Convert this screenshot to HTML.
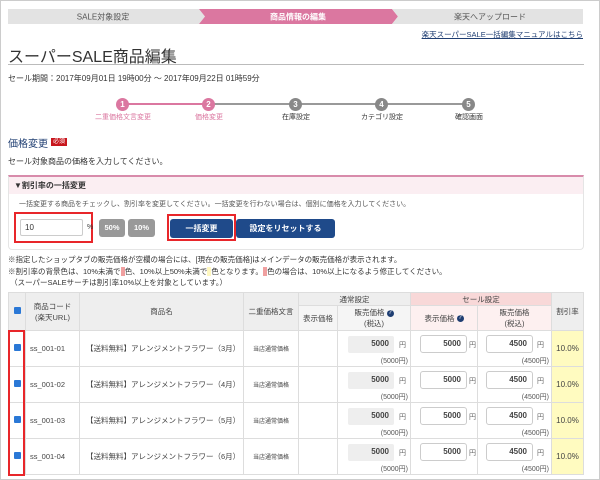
<!DOCTYPE html>
<html><head><meta charset="utf-8"><style>
*{margin:0;padding:0;box-sizing:border-box}
body{width:600px;height:480px;overflow:hidden;background:#fff;font-family:"Liberation Sans","Noto Sans CJK JP",sans-serif;color:#333;position:relative;border:1px solid #ccc}
.a{position:absolute;white-space:nowrap}
.tabs{position:absolute;left:7px;top:8px;width:575px;height:15px}
.circ{position:absolute;width:13px;height:13px;border-radius:50%;color:#fff;font-size:8px;text-align:center;line-height:13px;font-weight:bold}
.lbl{position:absolute;font-size:7px;width:80px;text-align:center}
table{position:absolute;left:7px;top:291px;border-collapse:collapse;table-layout:fixed;width:575px;font-size:7.5px}
td,th{border:1px solid #ddd;text-align:center;font-weight:normal;color:#444}
th{background:#eee}
.q{display:inline-block;width:7px;height:7px;border-radius:50%;background:#1f3e72;color:#fff;font-size:6px;line-height:7px;vertical-align:middle}
.cb{display:inline-block;width:7px;height:7px;background:#2a78d6;border-radius:1px}
.inp{position:absolute;border:1px solid #ccc;border-radius:3px;background:#fff;font-size:8px;font-weight:bold;text-align:right;padding-right:5px;line-height:16px;height:18px}
.gr{position:absolute;background:#eee;border-radius:2px;font-size:8px;font-weight:bold;text-align:right;padding-right:5px;line-height:16px;height:17px}
td{position:relative}
.yen{position:absolute;font-size:7px;color:#666}
.sub{position:absolute;font-size:7px;color:#555}
</style></head><body>
<svg class="tabs" width="575" height="15" viewBox="0 0 575 15">
<polygon points="0,0 191,0 197,7.5 191,15 0,15" fill="#e3e3e3"/>
<polygon points="191,0 384,0 390,7.5 384,15 191,15 197,7.5" fill="#db77a0"/>
<polygon points="384,0 575,0 575,15 384,15 390,7.5" fill="#e3e3e3"/>
<text x="95" y="10.5" font-size="8" fill="#555" text-anchor="middle" font-family="Liberation Sans,Noto Sans CJK JP,sans-serif">SALE対象設定</text>
<text x="290" y="10.5" font-size="8" fill="#fff" font-weight="bold" text-anchor="middle" font-family="Liberation Sans,Noto Sans CJK JP,sans-serif">商品情報の編集</text>
<text x="482" y="10.5" font-size="8" fill="#555" text-anchor="middle" font-family="Liberation Sans,Noto Sans CJK JP,sans-serif">楽天へアップロード</text>
</svg>
<div class="a" style="right:16px;top:28px;font-size:7.5px;color:#1f3e72;text-decoration:underline">楽天スーパーSALE一括編集マニュアルはこちら</div>
<div class="a" style="left:7px;top:42px;font-size:16px;color:#333">スーパーSALE商品編集</div>
<div class="a" style="left:7px;top:63px;width:576px;height:1px;background:#bbb"></div>
<div class="a" style="left:7px;top:72px;font-size:8px">セール期間：2017年09月01日 19時00分 〜 2017年09月22日 01時59分</div>
<div class="a" style="left:122px;top:102px;width:86px;height:2px;background:#db77a0"></div>
<div class="a" style="left:208px;top:102px;width:260px;height:2px;background:#999"></div>
<div class="circ" style="left:115px;top:97px;background:#db77a0">1</div>
<div class="circ" style="left:201px;top:97px;background:#db77a0">2</div>
<div class="circ" style="left:288px;top:97px;background:#888">3</div>
<div class="circ" style="left:374px;top:97px;background:#888">4</div>
<div class="circ" style="left:461px;top:97px;background:#888">5</div>
<div class="lbl" style="left:82px;top:111px;color:#db77a0">二重価格文言変更</div>
<div class="lbl" style="left:168px;top:111px;color:#db77a0">価格変更</div>
<div class="lbl" style="left:255px;top:111px">在庫設定</div>
<div class="lbl" style="left:341px;top:111px">カテゴリ設定</div>
<div class="lbl" style="left:428px;top:111px">確認画面</div>
<div class="a" style="left:7px;top:134px;font-size:10px;color:#1f3e72">価格変更</div>
<div class="a" style="left:50px;top:137px;font-size:6px;background:#c8161d;color:#fff;padding:0 2px;line-height:8px">必須</div>
<div class="a" style="left:7px;top:155px;font-size:8px">セール対象商品の価格を入力してください。</div>
<div class="a" style="left:7px;top:174px;width:576px;height:75px;border:1px solid #e5e5e5;border-top:2px solid #d88bab;border-radius:0 0 4px 4px"></div>
<div class="a" style="left:8px;top:176px;width:574px;height:17px;background:#fbeef2"></div>
<div class="a" style="left:13px;top:179px;font-size:8px;font-weight:bold">▼割引率の一括変更</div>
<div class="a" style="left:18px;top:198px;font-size:7px;color:#555">一括変更する商品をチェックし、割引率を変更してください。一括変更を行わない場合は、個別に価格を入力してください。</div>
<div class="a" style="left:13px;top:211px;width:79px;height:31px;border:2px solid #e8262a"></div>
<div class="a" style="left:19px;top:218px;width:63px;height:17px;border:1px solid #ccc;border-radius:2px;font-size:8px;line-height:15px;padding-left:4px">10</div>
<div class="a" style="left:86px;top:223px;font-size:7px">%</div>
<div class="a" style="left:98px;top:218px;width:26px;height:18px;background:#999;border-radius:3px;color:#fff;font-size:7.5px;font-weight:bold;text-align:center;line-height:18px">50%</div>
<div class="a" style="left:127px;top:218px;width:27px;height:18px;background:#999;border-radius:3px;color:#fff;font-size:7.5px;font-weight:bold;text-align:center;line-height:18px">10%</div>
<div class="a" style="left:169px;top:218px;width:63px;height:19px;background:#1f4a8a;border-radius:3px;color:#fff;font-size:8px;font-weight:bold;text-align:center;line-height:19px">一括変更</div>
<div class="a" style="left:235px;top:218px;width:99px;height:19px;background:#1f4a8a;border-radius:3px;color:#fff;font-size:8px;font-weight:bold;text-align:center;line-height:19px">設定をリセットする</div>
<div class="a" style="left:166px;top:213px;width:69px;height:27px;border:2px solid #e8262a"></div>
<div class="a" style="left:7px;top:253px;font-size:7.5px;line-height:11.5px">※指定したショップタブの販売価格が空欄の場合には、[現在の販売価格]はメインデータの販売価格が表示されます。<br>※割引率の背景色は、10%未満で<span style="background:#f0a0a0">&nbsp;&nbsp;</span>色、10%以上50%未満で<span style="background:#fff8c0">&nbsp;&nbsp;</span>色となります。<span style="background:#f0a0a0">&nbsp;&nbsp;</span>色の場合は、10%以上になるよう修正してください。<br>&nbsp;（スーパーSALEサーチは割引率10%以上を対象としています。）</div>
<table>
<colgroup><col style="width:17px"><col style="width:54px"><col style="width:164px"><col style="width:55px"><col style="width:39px"><col style="width:73px"><col style="width:67px"><col style="width:74px"><col style="width:32px"></colgroup>
<tr style="height:13px"><th rowspan="2"><span class="cb"></span></th><th rowspan="2">商品コード<br>(楽天URL)</th><th rowspan="2">商品名</th><th rowspan="2">二重価格文言</th><th colspan="2">通常設定</th><th colspan="2" style="background:#f8d8d8">セール設定</th><th rowspan="2">割引率</th></tr>
<tr style="height:25px"><th style="background:#f5f5f5">表示価格</th><th style="background:#f5f5f5">販売価格 <span class="q">?</span><br>(税込)</th><th style="background:#fdf0f0">表示価格 <span class="q">?</span></th><th style="background:#fdf0f0">販売価格<br>(税込)</th></tr>
<tr style="height:36px"><td><span class="cb"></span></td><td style="text-align:left;padding-left:4px">ss_001-01</td><td style="text-align:left;padding-left:6px">【送料無料】アレンジメントフラワー（3月）</td><td style="font-size:6px">当店通常価格</td><td></td><td><div class="gr" style="left:10px;top:5px;width:46px">5000</div><span class="yen" style="left:61px;top:9px">円</span><span class="sub" style="right:2px;top:25px">(5000円)</span></td><td><div class="inp" style="left:9px;top:4px;width:47px">5000</div><span class="yen" style="left:58px;top:9px">円</span></td><td><div class="inp" style="left:8px;top:4px;width:47px">4500</div><span class="yen" style="left:59px;top:9px">円</span><span class="sub" style="right:2px;top:25px">(4500円)</span></td><td style="background:#fffbc0;font-size:8px">10.0%</td></tr>
<tr style="height:36px"><td><span class="cb"></span></td><td style="text-align:left;padding-left:4px">ss_001-02</td><td style="text-align:left;padding-left:6px">【送料無料】アレンジメントフラワー（4月）</td><td style="font-size:6px">当店通常価格</td><td></td><td><div class="gr" style="left:10px;top:5px;width:46px">5000</div><span class="yen" style="left:61px;top:9px">円</span><span class="sub" style="right:2px;top:25px">(5000円)</span></td><td><div class="inp" style="left:9px;top:4px;width:47px">5000</div><span class="yen" style="left:58px;top:9px">円</span></td><td><div class="inp" style="left:8px;top:4px;width:47px">4500</div><span class="yen" style="left:59px;top:9px">円</span><span class="sub" style="right:2px;top:25px">(4500円)</span></td><td style="background:#fffbc0;font-size:8px">10.0%</td></tr>
<tr style="height:36px"><td><span class="cb"></span></td><td style="text-align:left;padding-left:4px">ss_001-03</td><td style="text-align:left;padding-left:6px">【送料無料】アレンジメントフラワー（5月）</td><td style="font-size:6px">当店通常価格</td><td></td><td><div class="gr" style="left:10px;top:5px;width:46px">5000</div><span class="yen" style="left:61px;top:9px">円</span><span class="sub" style="right:2px;top:25px">(5000円)</span></td><td><div class="inp" style="left:9px;top:4px;width:47px">5000</div><span class="yen" style="left:58px;top:9px">円</span></td><td><div class="inp" style="left:8px;top:4px;width:47px">4500</div><span class="yen" style="left:59px;top:9px">円</span><span class="sub" style="right:2px;top:25px">(4500円)</span></td><td style="background:#fffbc0;font-size:8px">10.0%</td></tr>
<tr style="height:36px"><td><span class="cb"></span></td><td style="text-align:left;padding-left:4px">ss_001-04</td><td style="text-align:left;padding-left:6px">【送料無料】アレンジメントフラワー（6月）</td><td style="font-size:6px">当店通常価格</td><td></td><td><div class="gr" style="left:10px;top:5px;width:46px">5000</div><span class="yen" style="left:61px;top:9px">円</span><span class="sub" style="right:2px;top:25px">(5000円)</span></td><td><div class="inp" style="left:9px;top:4px;width:47px">5000</div><span class="yen" style="left:58px;top:9px">円</span></td><td><div class="inp" style="left:8px;top:4px;width:47px">4500</div><span class="yen" style="left:59px;top:9px">円</span><span class="sub" style="right:2px;top:25px">(4500円)</span></td><td style="background:#fffbc0;font-size:8px">10.0%</td></tr>
</table>
<div class="a" style="left:7px;top:329px;width:17px;height:146px;border:2px solid #e8262a"></div>
</body></html>
